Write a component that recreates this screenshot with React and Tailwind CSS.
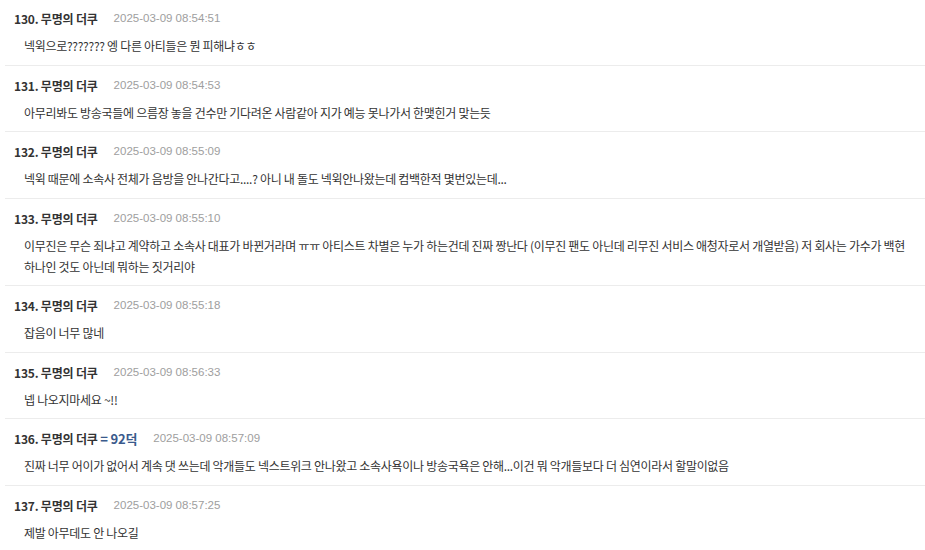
import React from "react";

const items = [
  { n: 130, date: "2025-03-09 08:54:51", text: "넥윅으로??????? 엥 다른 아티들은 뭔 피해냐ㅎㅎ" },
  { n: 131, date: "2025-03-09 08:54:53", text: "아무리봐도 방송국들에 으름장 놓을 건수만 기다려온 사람같아 지가 예능 못나가서 한맺힌거 맞는듯" },
  { n: 132, date: "2025-03-09 08:55:09", text: "넥윅 때문에 소속사 전체가 음방을 안나간다고....? 아니 내 돌도 넥윅안나왔는데 컴백한적 몇번있는데..." },
  { n: 133, date: "2025-03-09 08:55:10", text: "이무진은 무슨 죄냐고 계약하고 소속사 대표가 바뀐거라며 ㅠㅠ 아티스트 차별은 누가 하는건데 진짜 짱난다 (이무진 팬도 아닌데 리무진 서비스 애청자로서 개열받음) 저 회사는 가수가 백현 하나인 것도 아닌데 뭐하는 짓거리야" },
  { n: 134, date: "2025-03-09 08:55:18", text: "잡음이 너무 많네" },
  { n: 135, date: "2025-03-09 08:56:33", text: "넵 나오지마세요 ~!!" },
  { n: 136, date: "2025-03-09 08:57:09", text: "진짜 너무 어이가 없어서 계속 댓 쓰는데 악개들도 넥스트위크 안나왔고 소속사욕이나 방송국욕은 안해...이건 뭐 악개들보다 더 심연이라서 할말이없음", tag: "= 92덕" },
  { n: 137, date: "2025-03-09 08:57:25", text: "제발 아무데도 안 나오길" },
];

export default function App() {
  return (
    <div className="w-[925px] bg-white">
      <div
        className="flex flex-col pl-[5px] -mt-[1px]"
        style={{ fontFamily: '"Noto Sans CJK KR", "Noto Sans", sans-serif' }}
      >
        {items.map((it) => (
          <div key={it.n} className="border-b border-[#ececec] pt-[10px] pb-[8.5px]">
            <div className="flex items-center h-[20px] pl-[9px]">
              <span className="text-[12px] font-bold text-[#333333] tracking-[-0.2px]">
                {it.n}. 무명의 더쿠
                {it.tag && <span className="text-[13px] text-[#3a5a8c]"> {it.tag}</span>}
              </span>
              <span
                className="ml-[16px] text-[11.5px] text-[#9e9e9e]"
                style={{ fontFamily: '"Liberation Sans", Arial, sans-serif' }}
              >
                {it.date}
              </span>
            </div>
            <div className="mt-[6px] pl-[19px] pr-[10px] text-[12px] leading-[21px] tracking-[-0.3px] text-[#333333]">
              {it.text}
            </div>
          </div>
        ))}
      </div>
    </div>
  );
}
